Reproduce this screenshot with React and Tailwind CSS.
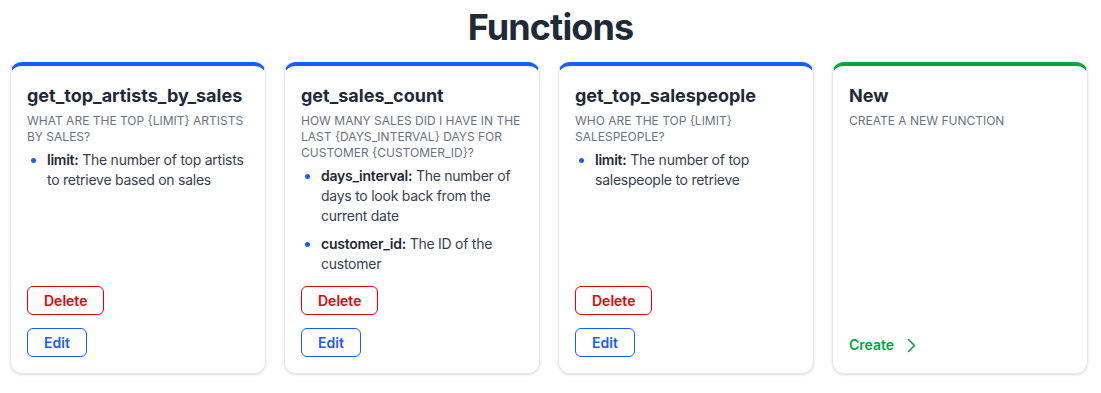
const functions = [
  {
    name: 'get_top_artists_by_sales',
    question: 'What are the top {limit} artists by sales?',
    params: [{ key: 'limit', text: 'The number of top artists to retrieve based on sales' }],
  },
  {
    name: 'get_sales_count',
    question: 'How many sales did I have in the last {days_interval} days for customer {customer_id}?',
    params: [
      { key: 'days_interval', text: 'The number of days to look back from the current date' },
      { key: 'customer_id', text: 'The ID of the customer' },
    ],
  },
  {
    name: 'get_top_salespeople',
    question: 'Who are the top {limit} salespeople?',
    params: [{ key: 'limit', text: 'The number of top salespeople to retrieve' }],
  },
];

function Card({ accent, children }) {
  return (
    <div className={`flex flex-col rounded-xl border border-gray-200 border-t-4 ${accent} bg-white p-4 shadow-sm`}>
      {children}
    </div>
  );
}

export default function App() {
  return (
    <div className="min-h-[393px] bg-white font-['Inter',sans-serif] antialiased">
      <h1 className="pt-[7px] text-center text-4xl font-bold leading-10 tracking-tight text-gray-800">Functions</h1>

      <div className="mt-[15px] grid grid-cols-4 gap-[18px] pl-[10px] pr-[13px]">
        {functions.map((fn) => (
          <Card key={fn.name} accent="border-t-blue-600">
            <div className="flex-1">
              <h2 className="text-lg font-bold leading-7 text-gray-800">{fn.name}</h2>
              <p className="mt-[3px] text-xs uppercase leading-4 text-gray-500">{fn.question}</p>
              <ul className="mt-[5px] list-disc space-y-2 pl-5 text-sm leading-5 tracking-[-0.25px] text-gray-700 marker:text-blue-600">
                {fn.params.map((p) => (
                  <li key={p.key}>
                    <span className="font-semibold text-gray-800">{p.key}:</span> {p.text}
                  </li>
                ))}
              </ul>
            </div>
            <div className="flex flex-col items-start gap-[13px] pt-3">
              <button className="h-[29px] rounded-md border border-red-600 px-4 text-sm font-semibold text-red-600">
                Delete
              </button>
              <button className="h-[29px] rounded-md border border-blue-600 px-4 text-sm font-semibold text-blue-600">
                Edit
              </button>
            </div>
          </Card>
        ))}

        <Card accent="border-t-green-600">
          <div className="flex-1">
            <h2 className="text-lg font-bold leading-7 text-gray-800">New</h2>
            <p className="mt-[3px] text-xs uppercase leading-4 text-gray-500">Create a new function</p>
          </div>
          <button className="mb-[2px] flex items-center gap-[13px] text-sm font-semibold leading-5 text-green-600">
            Create
            <svg width="9" height="15" viewBox="0 0 9 15" fill="none" stroke="currentColor" strokeWidth="1.6" strokeLinecap="round" strokeLinejoin="round">
              <path d="M1.5 1.5 7.5 7.5 1.5 13.5" />
            </svg>
          </button>
        </Card>
      </div>
    </div>
  );
}
